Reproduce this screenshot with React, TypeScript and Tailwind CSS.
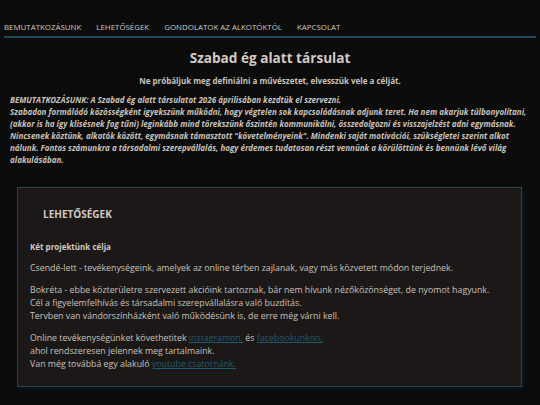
import React from 'react';

const navItems = ['BEMUTATKOZÁSUNK', 'LEHETŐSÉGEK', 'GONDOLATOK AZ ALKOTÓKTÓL', 'KAPCSOLAT'];

const App = () => {
  return (
    <div className="min-h-[405px] w-full bg-[#0c0c0c] text-[#c9c2bb] font-['Open_Sans',sans-serif] overflow-hidden">
      {/* Navigation */}
      <nav className="pt-[20px] px-[4px]">
        <ul className="flex gap-[15px] text-[7.9px] leading-[14px] text-[#cfc8c1] border-b-2 border-[#1d4757] pb-[2px]">
          {navItems.map((item) => (
            <li key={item}>{item}</li>
          ))}
        </ul>
      </nav>

      {/* Header */}
      <header className="text-center mt-[10px]">
        <h1 className="text-[13.6px] leading-[20px] font-bold text-[#d2cbc4]">Szabad ég alatt társulat</h1>
        <p className="mt-[7px] text-[8px] leading-[12px] font-bold">
          Ne próbáljuk meg definiálni a művészetet, elvesszük vele a célját.
        </p>
      </header>

      {/* Intro */}
      <section className="mt-[7px] px-[10px] text-[8px] leading-[11.9px] font-bold italic">
        <p>BEMUTATKOZÁSUNK: A Szabad ég alatt társulatot 2026 áprilisában kezdtük el szervezni.</p>
        <p>
          Szabadon formálódó közösségként igyekszünk működni, hogy végtelen sok kapcsolódásnak adjunk teret. Ha nem akarjuk
          túlbonyolítani, (akkor is ha így klisésnek fog tűni) leginkább mind törekszünk őszintén kommunikálni, összedolgozni és
          visszajelzést adni egymásnak. Nincsenek köztünk, alkotók között, egymásnak támasztott "követelményeink". Mindenki saját
          motivációi, szükségletei szerint alkot nálunk. Fontos számunkra a társadalmi szerepvállalás, hogy érdemes tudatosan részt
          vennünk a körülöttünk és bennünk lévő világ alakulásában.
        </p>
      </section>

      {/* Card */}
      <section className="mx-[17px] mt-[22px] w-[505px] h-[200px] bg-[#1c1818] border border-[#28444f] shadow-[2px_2px_4px_rgba(0,40,60,0.5)] px-[12px]">
        <h2 className="mt-[19px] ml-[13px] text-[10px] leading-[14px] font-bold text-[#d2cbc4]">LEHETŐSÉGEK</h2>
        <h3 className="mt-[20px] text-[8px] leading-[12px] font-bold text-[#d2cbc4]">Két projektünk célja</h3>
        <div className="mt-[9px] text-[8.8px] leading-[13px] text-[#c9c2bb]">
          <p>Csendé-lett - tevékenységeink, amelyek az online térben zajlanak, vagy más közvetett módon terjednek.</p>
          <p className="mt-[9px]">
            Bokréta - ebbe közterületre szervezett akcióink tartoznak, bár nem hívunk nézőközönséget, de nyomot hagyunk.
            <br />
            Cél a figyelemfelhívás és társadalmi szerepvállalásra való buzdítás.
            <br />
            Tervben van vándorszínházként való működésünk is, de erre még várni kell.
          </p>
          <p className="mt-[9px]">
            Online tevékenységünket követhetitek{' '}
            <a href="#" className="text-[#1e5a70] underline">instagramon,</a> és{' '}
            <a href="#" className="text-[#1e5a70] underline">facebookunkon,</a>
            <br />
            ahol rendszeresen jelennek meg tartalmaink.
            <br />
            Van még továbbá egy alakuló <a href="#" className="text-[#1e5a70] underline">youtube csatornánk.</a>
          </p>
        </div>
      </section>
    </div>
  );
};

export default App;
